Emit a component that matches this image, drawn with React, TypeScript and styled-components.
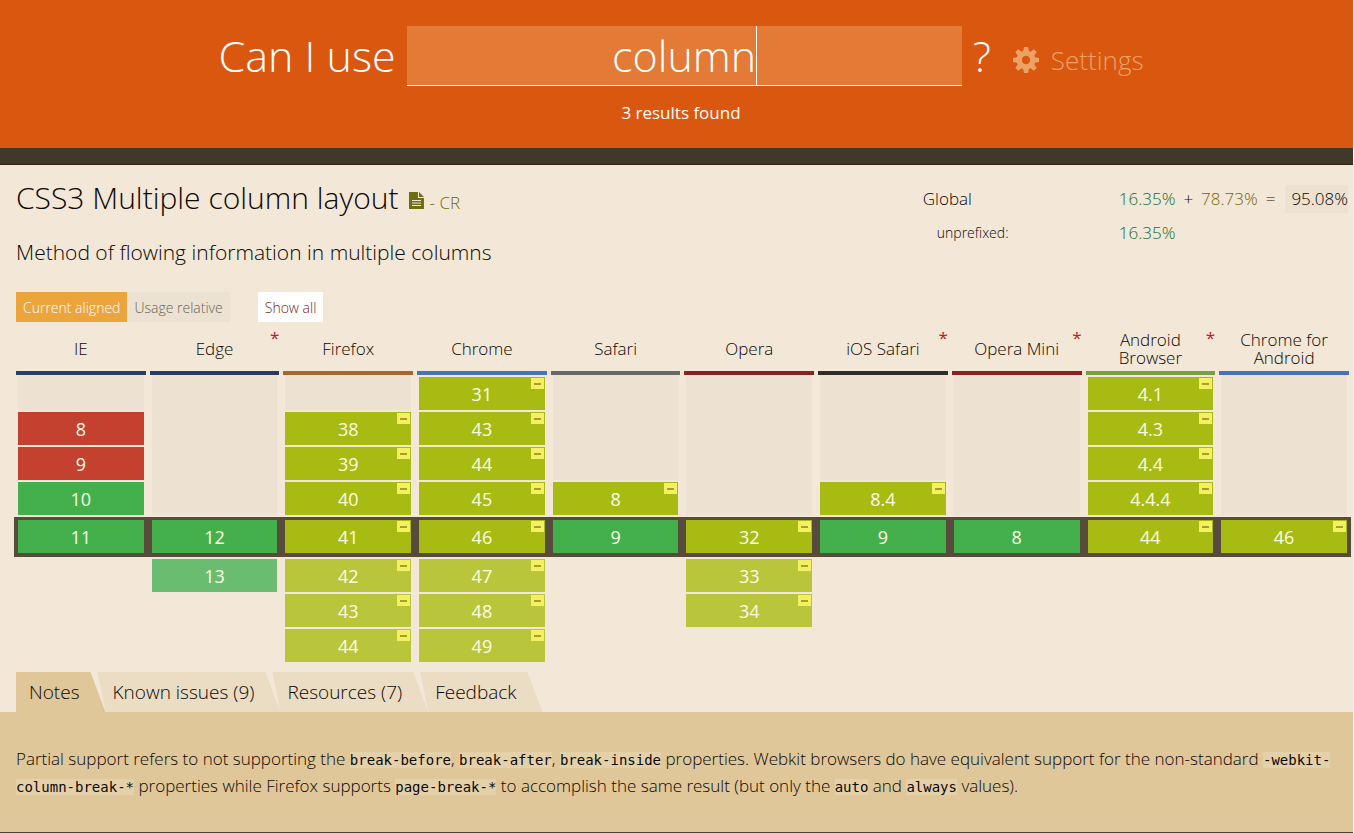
import React from "react";
import styled, { createGlobalStyle, css } from "styled-components";

const Global = createGlobalStyle`
  *, *::before, *::after { box-sizing: border-box; }
  body {
    margin: 0;
    border-right: 1px solid #f8f1e8;
    background: #f3e7d7;
    color: #0d0703;
    font-family: "Open Sans", "Noto Sans", sans-serif;
    font-weight: 300;
    font-size: 16px;
  }
`;

const Header = styled.header`
  display: flex;
  flex-direction: column;
  align-items: center;
  padding: 26px 16px 23px 25px;
  background: #da570f;
  color: #fff;
`;

const SearchRow = styled.form`
  display: flex;
  align-items: center;
  height: 60px;
  gap: 11px;
`;

const SearchLabel = styled.label`
  font-size: 43px;
  line-height: 60px;
  white-space: nowrap;
`;

const SearchField = styled.span`
  position: relative;
  width: 41vw;
`;

const SearchInput = styled.input`
  display: block;
  width: 100%;
  height: 60px;
  padding: 0;
  border: 0;
  border-bottom: 1px solid #fff;
  border-radius: 0;
  outline: 0;
  background: #e37a35;
  color: #fff;
  font: inherit;
  font-size: 43px;
  text-align: center;
`;

const Caret = styled.span`
  position: absolute;
  top: 0;
  left: calc(50% + 72px);
  width: 1px;
  height: 60px;
  background: #fff;
`;

const Settings = styled.button`
  display: flex;
  align-items: center;
  gap: 12px;
  margin-left: 11px;
  padding: 8px 0 0;
  border: 0;
  background: none;
  color: #eda265;
  font: inherit;
  font-size: 26px;
  line-height: 32px;
`;

const ResultCount = styled.p`
  margin: 14px 0 0;
  font-size: 17px;
  line-height: 25px;
  font-weight: 400;
`;

const Band = styled.div`
  height: 17px;
  background: #3f382b;
  border-bottom: 1px solid #35210f;
`;

const Intro = styled.section`
  display: flex;
  justify-content: space-between;
  padding: 12px 5px 0 16px;
`;

const Title = styled.h1`
  display: flex;
  align-items: baseline;
  gap: 10px;
  margin: 0;
  font-size: 30px;
  line-height: 42px;
  font-weight: 300;
`;

const SpecLink = styled.a`
  display: inline-flex;
  align-items: baseline;
  gap: 6px;
  color: #6f6e12;
  font-size: 17px;
  text-decoration: none;
`;

const Lead = styled.p`
  margin: 13px 0 0;
  font-size: 21px;
  line-height: 30px;
`;

const Usage = styled.dl`
  display: grid;
  grid-template-columns: 196px auto;
  align-content: start;
  row-gap: 6px;
  margin: 8px 0 0;
  font-size: 17px;
  line-height: 28px;
`;

const UsageTerm = styled.dt<{ $sub?: boolean }>`
  ${(p) => p.$sub && css`padding-left: 14px; font-size: 14px;`}
`;

const UsageValue = styled.dd`
  display: flex;
  gap: 8px;
  margin: 0;
`;

const Percent = styled.span<{ $tone: "full" | "partial" | "total" }>`
  color: ${(p) => ({ full: "#14702c", partial: "#756606", total: "#0d0703" })[p.$tone]};
  ${(p) => p.$tone === "total" && css`
    margin-left: 2px;
    padding-left: 6px;
    background: #ede1d0;
  `}
`;

const Toolbar = styled.div`
  display: flex;
  padding: 25px 16px 0;
`;

const ModeButton = styled.button<{ $kind: "active" | "idle" | "plain" }>`
  height: 30px;
  padding: 0 7px;
  border: 0;
  font: inherit;
  font-size: 14px;
  ${(p) => p.$kind === "active" && css`background: #eba53c; color: #fff;`}
  ${(p) => p.$kind === "idle" && css`background: #ece2d2; color: #6a6359;`}
  ${(p) => p.$kind === "plain" && css`margin-left: 28px; background: #fff; color: #7a1f2b;`}
`;

const TableWrap = styled.div`
  padding: 5px 2px 0 14px;
`;

const SupportTable = styled.table`
  width: 100%;
  table-layout: fixed;
  border-collapse: separate;
  border-spacing: 0;
`;

const BrowserHead = styled.th`
  height: 48px;
  padding: 0 2px;
  font-weight: 300;
`;

const BrowserName = styled.div<{ $bar: string }>`
  position: relative;
  display: flex;
  align-items: center;
  justify-content: center;
  height: 48px;
  padding: 0 16px;
  border-bottom: 4px solid ${(p) => p.$bar};
  font-size: 17px;
  line-height: 18px;
`;

const Star = styled.sup`
  position: absolute;
  top: 2px;
  right: 0;
  color: #b3202a;
  font-size: 17px;
  line-height: 18px;
  font-weight: 400;
`;

type Era = "past" | "current" | "future";

const Slot = styled.td<{ $era: Era; $empty: boolean }>`
  padding: 2px 4px 0;
  ${(p) => p.$era === "past" && p.$empty && css`padding-top: 0;`}
  ${(p) => p.$era === "current" && css`
    padding: 3px 4px 4px;
    border-top: 2px solid transparent;
    background: #594b3c padding-box;
  `}
`;

const Blank = styled.div`
  height: 35px;
  background: #ede2d1;
`;

const fills = {
  y: ["#43b04c", "#6abd70"],
  a: ["#a7bb13", "#b9c63c"],
  n: ["#c4402f", "#c4402f"],
};

const Version = styled.div<{ $support: keyof typeof fills; $era: Era }>`
  position: relative;
  height: 33px;
  background: ${(p) => fills[p.$support][p.$era === "future" ? 1 : 0]};
  color: #fcfbe6;
  font-size: 18px;
  line-height: 34px;
  font-weight: 400;
  text-align: center;
`;

const PrefixFlag = styled.span`
  position: absolute;
  top: 1px;
  right: 1px;
  display: flex;
  align-items: center;
  justify-content: center;
  width: 13px;
  height: 11px;
  background: #f5f062;

  &::before {
    content: "";
    width: 7px;
    height: 2px;
    background: #a3a12c;
  }
`;

const Tabs = styled.nav`
  display: flex;
  padding: 10px 16px 0;
`;

const Tab = styled.button<{ $active?: boolean }>`
  height: 40px;
  margin: 0 0 0 -8px;
  padding: 0 26px 0 15px;
  border: 0;
  background: #eaddc4;
  color: inherit;
  font: inherit;
  font-size: 19px;
  clip-path: polygon(0 0, calc(100% - 15px) 0, 100% 100%, 8px 100%);
  ${(p) => p.$active && css`
    margin-left: 0;
    padding-left: 13px;
    background: #dfc79a;
    clip-path: polygon(0 0, calc(100% - 15px) 0, 100% 100%, 0 100%);
  `}
`;

const Notes = styled.section`
  padding: 33px 4px 33px 16px;
  border-bottom: 1px solid #4a4233;
  background: #dfc79a;
`;

const NotesText = styled.p`
  margin: 0;
  font-size: 17px;
  line-height: 27px;
`;

const Code = styled.code`
  background: #e4d1aa;
  font-family: "DejaVu Sans Mono", "Liberation Mono", monospace;
  font-size: 14px;
  line-height: 20px;
  font-weight: 400;
`;

const GearIcon = () => (
  <svg width="26" height="26" viewBox="0 0 26 26" fill="currentColor" aria-hidden="true">
    <path
      fillRule="evenodd"
      d="M11 0h4l.8 4 1.700.7L20.900 2.300l2.800 2.800-2.400 3.400.7 1.700 4 .8v4l-4 .8-.7 1.700 2.400 3.400-2.800 2.800-3.400-2.400-1.700.7-.8 4h-4l-.8-4-1.700-.7-3.400 2.400-2.800-2.800 2.400-3.400-.7-1.700-4-.8v-4l4-.8.7-1.700-2.400-3.400 2.800-2.800 3.400 2.400 1.700-.7zM13 8.800a4.200 4.200 0 1 0 0 8.400 4.200 4.200 0 0 0 0-8.400z"
    />
  </svg>
);

const DocumentIcon = () => (
  <svg width="15" height="17" viewBox="0 0 15 17" fill="currentColor" aria-hidden="true">
    <path fillRule="evenodd" d="M0 0h9v6h6v11H0zM3 8v1h9V8zM3 10.500v1h9v-1zM3 13v1h9v-1z" />
    <path d="M10 0l5 5h-5z" />
  </svg>
);

interface Browser {
  name: string;
  bar: string;
  star?: boolean;
}

const browsers: Browser[] = [
  { name: "IE", bar: "#263f66" },
  { name: "Edge", bar: "#263a63", star: true },
  { name: "Firefox", bar: "#a9652a" },
  { name: "Chrome", bar: "#4177b8" },
  { name: "Safari", bar: "#696866" },
  { name: "Opera", bar: "#852423" },
  { name: "iOS Safari", bar: "#302c2b", star: true },
  { name: "Opera Mini", bar: "#8b2124", star: true },
  { name: "Android Browser", bar: "#75a03d", star: true },
  { name: "Chrome for Android", bar: "#4672bb" },
];

/* Each entry is "version:support", with "a" (partial) entries needing a vendor prefix. */
const rows: { era: Era; cells: string[] }[] = [
  { era: "past", cells: ["", "", "", "31:a", "", "", "", "", "4.1:a", ""] },
  { era: "past", cells: ["8:n", "", "38:a", "43:a", "", "", "", "", "4.3:a", ""] },
  { era: "past", cells: ["9:n", "", "39:a", "44:a", "", "", "", "", "4.4:a", ""] },
  { era: "past", cells: ["10:y", "", "40:a", "45:a", "8:a", "", "8.4:a", "", "4.4.4:a", ""] },
  { era: "current", cells: ["11:y", "12:y", "41:a", "46:a", "9:y", "32:a", "9:y", "8:y", "44:a", "46:a"] },
  { era: "future", cells: ["", "13:y", "42:a", "47:a", "", "33:a", "", "", "", ""] },
  { era: "future", cells: ["", "", "43:a", "48:a", "", "34:a", "", "", "", ""] },
  { era: "future", cells: ["", "", "44:a", "49:a", "", "", "", "", "", ""] },
];

function VersionSlot({ era, value }: { era: Era; value: string }) {
  const [version, support] = value.split(":");
  return (
    <Slot $era={era} $empty={!value}>
      {value ? (
        <Version $support={support as keyof typeof fills} $era={era}>
          {version}
          {support === "a" && <PrefixFlag />}
        </Version>
      ) : (
        era === "past" && <Blank />
      )}
    </Slot>
  );
}

export default function App() {
  return (
    <>
      <Global />
      <Header>
        <SearchRow onSubmit={(e) => e.preventDefault()}>
          <SearchLabel htmlFor="feature">Can I use</SearchLabel>
          <SearchField>
            <SearchInput id="feature" type="text" defaultValue="column" />
            <Caret />
          </SearchField>
          <SearchLabel as="span">?</SearchLabel>
          <Settings type="button">
            <GearIcon />
            Settings
          </Settings>
        </SearchRow>
        <ResultCount>3 results found</ResultCount>
      </Header>
      <Band />
      <main>
        <Intro>
          <div>
            <Title>
              CSS3 Multiple column layout
              <SpecLink href="#spec">
                <DocumentIcon />- CR
              </SpecLink>
            </Title>
            <Lead>Method of flowing information in multiple columns</Lead>
          </div>
          <Usage>
            <UsageTerm>Global</UsageTerm>
            <UsageValue>
              <Percent $tone="full">16.35%</Percent>+<Percent $tone="partial">78.73%</Percent>=
              <Percent $tone="total">95.08%</Percent>
            </UsageValue>
            <UsageTerm $sub>unprefixed:</UsageTerm>
            <UsageValue>
              <Percent $tone="full">16.35%</Percent>
            </UsageValue>
          </Usage>
        </Intro>
        <Toolbar>
          <ModeButton type="button" $kind="active">Current aligned</ModeButton>
          <ModeButton type="button" $kind="idle">Usage relative</ModeButton>
          <ModeButton type="button" $kind="plain">Show all</ModeButton>
        </Toolbar>
        <TableWrap>
          <SupportTable>
            <thead>
              <tr>
                {browsers.map((b) => (
                  <BrowserHead key={b.name} scope="col">
                    <BrowserName $bar={b.bar}>
                      {b.name}
                      {b.star && <Star>*</Star>}
                    </BrowserName>
                  </BrowserHead>
                ))}
              </tr>
            </thead>
            <tbody>
              {rows.map((row, r) => (
                <tr key={r}>
                  {row.cells.map((value, c) => (
                    <VersionSlot key={c} era={row.era} value={value} />
                  ))}
                </tr>
              ))}
            </tbody>
          </SupportTable>
        </TableWrap>
        <Tabs>
          <Tab type="button" $active>Notes</Tab>
          <Tab type="button">Known issues (9)</Tab>
          <Tab type="button">Resources (7)</Tab>
          <Tab type="button">Feedback</Tab>
        </Tabs>
        <Notes>
          <NotesText>
            Partial support refers to not supporting the <Code>break-before</Code>, <Code>break-after</Code>,{" "}
            <Code>break-inside</Code> properties. Webkit browsers do have equivalent support for the non-standard{" "}
            <Code>-webkit-column-break-*</Code> properties while Firefox supports <Code>page-break-*</Code> to
            accomplish the same result (but only the <Code>auto</Code> and <Code>always</Code> values).
          </NotesText>
        </Notes>
      </main>
    </>
  );
}
